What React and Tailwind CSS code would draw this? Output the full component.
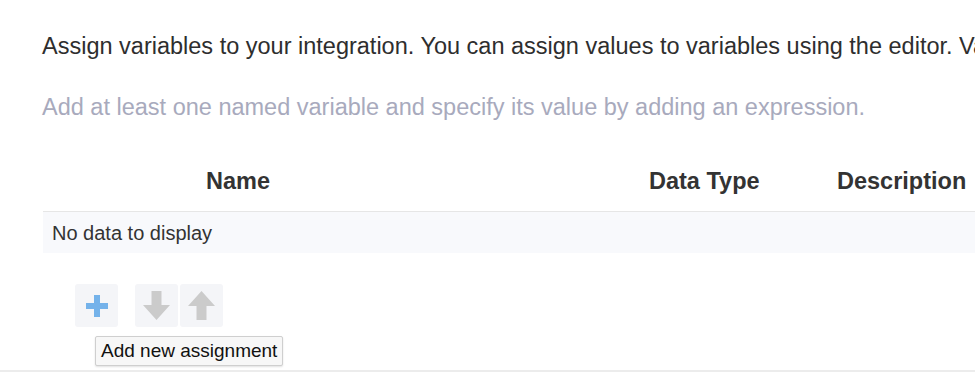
import React from 'react';

const ArrowDown = () => (
    <svg width="27" height="29" viewBox="0 0 27 29" fill="#cbcbcb">
        <path d="M8.5 0H18.5V14H27L13.5 29L0 14H8.5Z" />
    </svg>
);

const ArrowUp = () => (
    <svg width="27" height="29" viewBox="0 0 27 29" fill="#cbcbcb">
        <path d="M8.5 29H18.5V15H27L13.5 0L0 15H8.5Z" />
    </svg>
);

const PlusIcon = () => (
    <svg width="22" height="22" viewBox="0 0 22 22" fill="#74b2ea">
        <path d="M8 0H14V8H22V14H14V22H8V14H0V8H8Z" />
    </svg>
);

export default function App() {
    return (
        <div className="w-[975px] h-[372px] overflow-hidden bg-white font-['Liberation_Sans',Arial,sans-serif]">
            <div className="relative h-[370px] w-[1200px] border-b-2 border-[#ececec] box-content">
                {/* intro text */}
                <p className="pt-[32px] pl-[42px] text-[23.5px] leading-[28px] text-[#2e2e2e] whitespace-nowrap">
                    Assign variables to your integration. You can assign values to variables using the editor. Variables are available to all actions.
                </p>
                <p className="mt-[33px] pl-[42px] text-[23.5px] leading-[28px] text-[#a8aabd] whitespace-nowrap">
                    Add at least one named variable and specify its value by adding an expression.
                </p>

                {/* table */}
                <div className="ml-[43px] mt-[46px]">
                    <div className="flex h-[45px] border-b border-[#e6e6e6] text-[23.5px] leading-[28px] font-bold text-[#333333]">
                        <div className="w-[390px] text-center">Name</div>
                        <div className="w-[188px] ml-[216px]">Data Type</div>
                        <div>Description</div>
                    </div>
                    <div className="flex items-center h-[41px] bg-[#f8f9fc] pl-[9px] text-[20px] text-[#333333]">
                        No data to display
                    </div>
                </div>

                {/* toolbar */}
                <div className="flex items-center ml-[75px] mt-[31px]">
                    <button className="w-[43px] h-[43px] rounded-[3px] bg-[#f4f5f8] flex items-center justify-center">
                        <PlusIcon />
                    </button>
                    <div className="flex gap-[2px] ml-[17px]">
                        <button className="w-[43px] h-[43px] rounded-[3px] bg-[#f4f5f8] flex items-center justify-center">
                            <ArrowDown />
                        </button>
                        <button className="w-[43px] h-[43px] rounded-[3px] bg-[#f4f5f8] flex items-center justify-center">
                            <ArrowUp />
                        </button>
                    </div>
                </div>

                {/* tooltip */}
                <div className="absolute left-[95px] top-[336px] h-[30px] px-[5px] flex items-center bg-[#f7f7f7] border border-[#cfcfcf] rounded-[2px] shadow-[0_1px_2px_rgba(0,0,0,0.12)] text-[19px] text-[#111111] whitespace-nowrap">
                    Add new assignment
                </div>
            </div>
        </div>
    );
}
